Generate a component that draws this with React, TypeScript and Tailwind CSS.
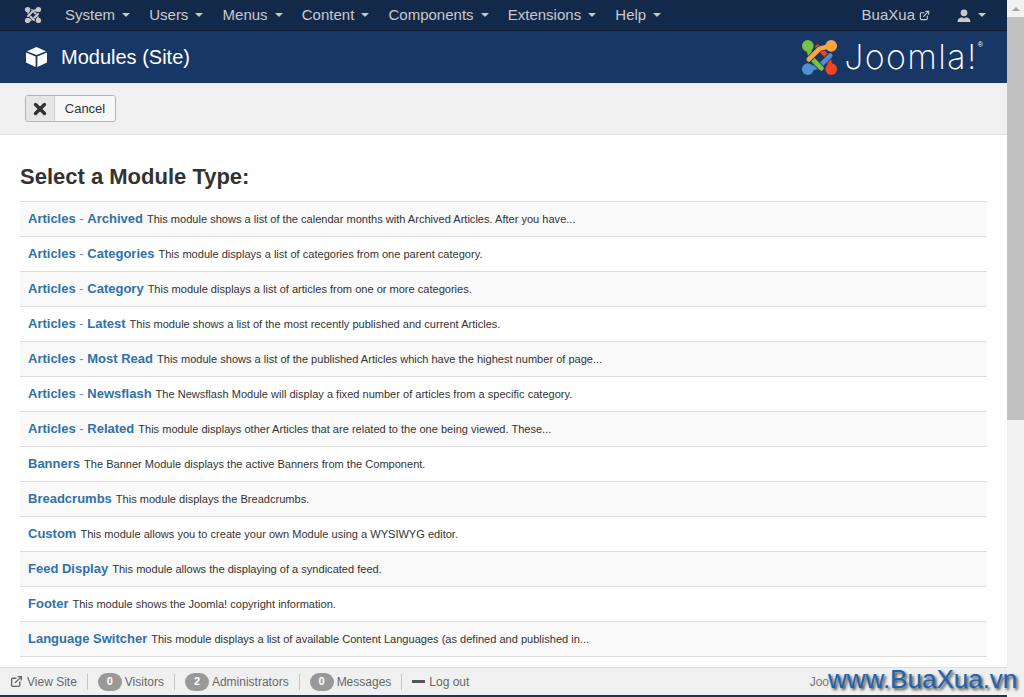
import { ExternalLink, X } from "lucide-react";

const modules = [
  { name: "Articles", sub: "Archived", desc: "This module shows a list of the calendar months with Archived Articles. After you have..." },
  { name: "Articles", sub: "Categories", desc: "This module displays a list of categories from one parent category." },
  { name: "Articles", sub: "Category", desc: "This module displays a list of articles from one or more categories." },
  { name: "Articles", sub: "Latest", desc: "This module shows a list of the most recently published and current Articles." },
  { name: "Articles", sub: "Most Read", desc: "This module shows a list of the published Articles which have the highest number of page..." },
  { name: "Articles", sub: "Newsflash", desc: "The Newsflash Module will display a fixed number of articles from a specific category." },
  { name: "Articles", sub: "Related", desc: "This module displays other Articles that are related to the one being viewed. These..." },
  { name: "Banners", desc: "The Banner Module displays the active Banners from the Component." },
  { name: "Breadcrumbs", desc: "This module displays the Breadcrumbs." },
  { name: "Custom", desc: "This module allows you to create your own Module using a WYSIWYG editor." },
  { name: "Feed Display", desc: "This module allows the displaying of a syndicated feed." },
  { name: "Footer", desc: "This module shows the Joomla! copyright information." },
  { name: "Language Switcher", desc: "This module displays a list of available Content Languages (as defined and published in..." },
];

const menus = ["System", "Users", "Menus", "Content", "Components", "Extensions", "Help"];

function Caret() {
  return <span className="ml-[7px] inline-block w-0 h-0 border-x-4 border-x-transparent border-t-4 border-t-[#c8c8c8]" />;
}

// four hooked arms, each ending in a round knob
const arms = [
  { d: "M32 32 L29 20 L18 9", knob: [32, 32], color: "#f44321" },
  { d: "M8 32 L20 29 L31 18", knob: [8, 32], color: "#5091cd" },
  { d: "M8 8 L11 20 L22 31", knob: [8, 8], color: "#7ac143" },
  { d: "M32 8 L20 11 L9 22", knob: [32, 8], color: "#f9a541" },
];

function JoomlaMark({ size, bg, mono }: { size: number; bg: string; mono?: string }) {
  return (
    <svg width={size} height={size} viewBox="0 0 40 40" fill="none" strokeLinecap="round" strokeLinejoin="round">
      {arms.map((a) => (
        <g key={a.color}>
          <path d={a.d} stroke={bg} strokeWidth="6.5" />
          <path d={a.d} stroke={mono ?? a.color} strokeWidth="4.8" />
          <circle cx={a.knob[0]} cy={a.knob[1]} r="6" fill={mono ?? a.color} />
        </g>
      ))}
    </svg>
  );
}

function CubeIcon() {
  return (
    <svg width="21" height="20" viewBox="0 0 21 20" fill="#ffffff">
      <path d="M10.5 0 L20 4.2 L10.5 8 L1 4.2 Z" />
      <path d="M0 5.6 L9.6 9.5 L9.6 20 L0 15.6 Z" />
      <path d="M21 5.6 L11.4 9.5 L11.4 20 L21 15.6 Z" />
    </svg>
  );
}

function UserIcon() {
  return (
    <svg width="14" height="13" viewBox="0 0 14 13" fill="#c8cacc">
      <circle cx="7" cy="3.8" r="3.4" />
      <path d="M0.5 13 C0.5 9.8 2.5 8.6 5 8.2 L7 9.6 L9 8.2 C11.5 8.6 13.5 9.8 13.5 13 Z" />
    </svg>
  );
}

function Badge({ n }: { n: number }) {
  return (
    <span className="w-[24px] h-[18px] rounded-full bg-[#999999] text-white text-[11px] font-bold flex items-center justify-center mr-[3px]">
      {n}
    </span>
  );
}

function Sep() {
  return <span className="w-px h-[16px] bg-[#c4c4c4] mx-[10px]" />;
}

export default function App() {
  return (
    <div className="relative h-[697px] w-[1024px] overflow-hidden flex bg-white font-['Liberation_Sans',Arial,sans-serif] text-[#333333]">
      <div className="w-[1007px] flex flex-col h-full">
        {/* Top nav */}
        <nav className="h-[31px] shrink-0 bg-[#13294a] border-b border-[#0c1b33] flex items-center text-[15px] text-[#c8cacc]">
          <div className="w-[65px] pl-[24px] shrink-0">
            <JoomlaMark size={18} bg="#13294a" mono="#c4c8cc" />
          </div>
          <ul className="flex gap-[19.2px]">
            {menus.map((m) => (
              <li key={m} className="flex items-center">
                {m}
                <Caret />
              </li>
            ))}
          </ul>
          <div className="ml-auto flex items-center pr-[21px]">
            <span>BuaXua</span>
            <ExternalLink size={11} strokeWidth={2.5} className="ml-[4px]" />
            <span className="ml-[27px]">
              <UserIcon />
            </span>
            <Caret />
          </div>
        </nav>

        {/* Title bar */}
        <header className="h-[52px] shrink-0 bg-[#183765] flex items-center pl-[26px] pr-[24px] text-white">
          <CubeIcon />
          <h1 className="ml-[14px] text-[20px] leading-none">Modules (Site)</h1>
          <div className="ml-auto flex items-center">
            <JoomlaMark size={39} bg="#183765" />
            <span className="ml-[5px] font-['Inter',sans-serif] font-extralight text-[34px] leading-none tracking-[1.4px]">Joomla!</span>
            <span className="text-[7px] self-start mt-[2px]">®</span>
          </div>
        </header>

        {/* Toolbar */}
        <div className="h-[52px] shrink-0 bg-[#f0f0f0] border-b border-[#dddddd] pt-[12px] pl-[25px]">
          <button className="flex h-[27px] w-[91px] rounded-[3px] border border-[#b3b3b3] bg-white overflow-hidden text-[13px] items-stretch">
            <span className="w-[29px] bg-[#e6e6e6] border-r border-[#cccccc] flex items-center justify-center">
              <X size={18} strokeWidth={4.5} className="text-[#333333]" />
            </span>
            <span className="flex-1 flex items-center justify-center text-[#333333] bg-[#f7f7f7]">Cancel</span>
          </button>
        </div>

        {/* Content */}
        <main className="flex-1 min-h-0 overflow-hidden pl-[20px] pr-[20px] pt-[29px]">
          <h2 className="text-[22px] font-bold leading-[26px] mb-[11px] text-[#333333]">Select a Module Type:</h2>
          <ul className="border-t border-[#dddddd]">
            {modules.map((m, i) => (
              <li
                key={m.name + (m.sub ?? "")}
                className={`h-[35px] border-b border-[#dddddd] pl-[8px] flex items-center whitespace-nowrap ${i % 2 === 0 ? "bg-[#f9f9f9]" : "bg-white"}`}
              >
                <span className="text-[13px] font-bold text-[#3071a9]">
                  {m.name}
                  {m.sub && <span className="font-normal text-[#5b8cb5]"> - </span>}
                  {m.sub}
                </span>
                <span className="text-[11.05px] text-[#333333] ml-[4px]">{m.desc}</span>
              </li>
            ))}
          </ul>
        </main>

        {/* Footer */}
        <footer className="h-[28px] shrink-0 bg-[#f0f0f0] border-t border-[#dddddd] flex items-center pl-[10px] text-[12px] text-[#666666]">
          <ExternalLink size={13} strokeWidth={2.5} className="mr-[4px]" />
          <span>View Site</span>
          <Sep />
          <Badge n={0} />
          <span>Visitors</span>
          <Sep />
          <Badge n={2} />
          <span>Administrators</span>
          <Sep />
          <Badge n={0} />
          <span>Messages</span>
          <Sep />
          <span className="w-[13px] h-[3px] bg-[#555555] mr-[4px]" />
          <span>Log out</span>
          <span className="ml-auto pr-[178px] text-[#777777]">Joo</span>
        </footer>
        <div className="h-[2px] shrink-0 bg-[#1d3557]" />
      </div>

      {/* Scrollbar */}
      <div className="w-[17px] h-full bg-[#f1f1f1] flex flex-col items-center shrink-0">
        <div className="h-[17px] flex items-center justify-center">
          <span className="w-0 h-0 border-x-4 border-x-transparent border-b-4 border-b-[#a3a3a3]" />
        </div>
        <div className="w-full h-[403px] bg-[#c1c1c1]" />
      </div>

      {/* Watermark */}
      <div className="absolute left-[828px] top-[664px] text-[26px] leading-[30px] text-[#1c63b4] [text-shadow:2px_2px_3px_rgba(0,0,0,0.75)] whitespace-nowrap">
        www.BuaXua.vn
      </div>
    </div>
  );
}
